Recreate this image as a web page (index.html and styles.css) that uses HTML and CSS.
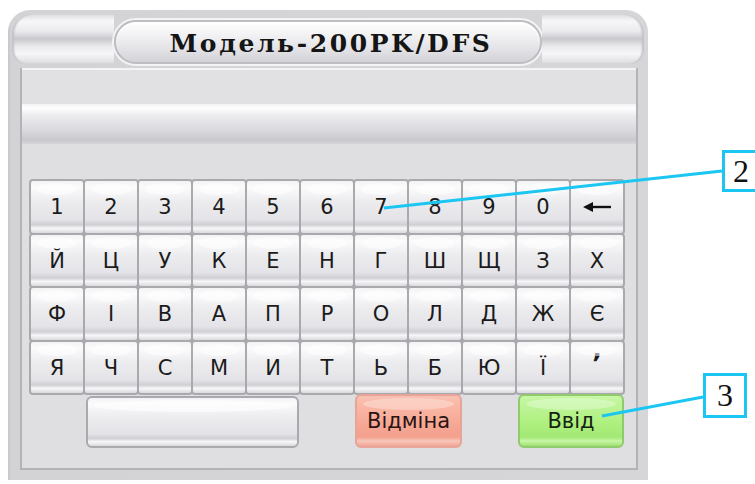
FILE: index.html
```html
<!DOCTYPE html>
<html lang="uk">
<head>
<meta charset="utf-8">
<title>Модель-200PK/DFS</title>
<link rel="stylesheet" href="styles.css">
</head>
<body>
<div class="page">
  <div class="window">
    <div class="header">
      <div class="wing wing-left"></div>
      <div class="title-pill"><span class="title-text">Модель-200PK/DFS</span></div>
      <div class="wing wing-right"></div>
    </div>
    <div class="panel">
      <div class="input-line"></div>
      <div class="input-bar"></div>
      <div class="keyboard">
        <div class="key">1</div><div class="key">2</div><div class="key">3</div><div class="key">4</div><div class="key">5</div><div class="key">6</div><div class="key">7</div><div class="key">8</div><div class="key">9</div><div class="key">0</div>
        <div class="key"><svg class="arrow" width="30" height="12" viewBox="0 0 30 12"><path d="M9 6H29" stroke="#111" stroke-width="2.4"/><path d="M1 6L11 1V11Z" fill="#111"/></svg></div>
        <div class="key">Й</div><div class="key">Ц</div><div class="key">У</div><div class="key">К</div><div class="key">Е</div><div class="key">Н</div><div class="key">Г</div><div class="key">Ш</div><div class="key">Щ</div><div class="key">З</div><div class="key">Х</div>
        <div class="key">Ф</div><div class="key">І</div><div class="key">В</div><div class="key">А</div><div class="key">П</div><div class="key">Р</div><div class="key">О</div><div class="key">Л</div><div class="key">Д</div><div class="key">Ж</div><div class="key">Є</div>
        <div class="key">Я</div><div class="key">Ч</div><div class="key">С</div><div class="key">М</div><div class="key">И</div><div class="key">Т</div><div class="key">Ь</div><div class="key">Б</div><div class="key">Ю</div><div class="key">Ї</div><div class="key apos">’</div>
        <div class="key space"></div>
        <div class="key btn-cancel">Відміна</div>
        <div class="key btn-enter">Ввід</div>
      </div>
    </div>
  </div>

  <svg class="leaders" width="755" height="484" viewBox="0 0 755 484">
    <line x1="722" y1="171" x2="384" y2="208" stroke="#1cc6f2" stroke-width="3"/>
    <line x1="703" y1="397" x2="602" y2="416" stroke="#1cc6f2" stroke-width="3"/>
  </svg>
  <div class="callout callout-2">2</div>
  <div class="callout callout-3">3</div>
</div>
</body>
</html>
```
FILE: styles.css
```css
html, body {
  margin: 0;
  padding: 0;
  background: #ffffff;
}

.page {
  position: relative;
  width: 755px;
  height: 484px;
  padding: 10px 0 0 8px;
  box-sizing: border-box;
  overflow: hidden;
}

/* outer device frame */
.window {
  width: 640px;
  height: 470px;
  box-sizing: border-box;
  border-radius: 22px 22px 0 0;
  background: linear-gradient(to right, #c6c6c9 0, #d3d3d6 3px, #d6d6d9 100%);
  padding: 0 10px 10px 12px;
  display: flex;
  flex-direction: column;
}

/* title area */
.header {
  height: 58px;
  margin: 0 -8px 0 -10px;
  padding: 3px 2px 0 2px;
  box-sizing: border-box;
  display: flex;
  align-items: stretch;
}

.wing {
  flex: 1;
  height: 50px;
  margin-top: 1px;
  background: linear-gradient(to bottom,
    #dcdce0 0,
    #f7f7f9 14%,
    #ebebee 34%,
    #c9c9cd 50%,
    #e9e9ec 64%,
    #f6f6f8 80%,
    #dcdce0 100%);
}

.wing-left {
  border-radius: 20px 0 0 14px;
  box-shadow: inset 2px 0 2px #c2c2c6;
}

.wing-right {
  border-radius: 0 20px 14px 0;
  box-shadow: inset -2px 0 2px #c2c2c6;
}

.title-pill {
  width: 428px;
  height: 44px;
  margin-top: 7px;
  box-sizing: border-box;
  border-radius: 22px;
  border: 2px solid #bdbdc2;
  box-shadow: 0 0 0 2px #f4f4f6, inset 0 2px 2px #ffffff;
  background: linear-gradient(to bottom, #fefefe 0, #f1f1f3 35%, #e2e2e6 70%, #d3d3d7 100%);
  display: flex;
  align-items: center;
  justify-content: center;
}

.title-text {
  font-family: "DejaVu Serif", "Liberation Serif", serif;
  font-weight: bold;
  font-size: 25px;
  color: #151515;
  letter-spacing: 2.6px;
  padding-left: 6px;
  padding-top: 2px;
}

/* inner panel */
.panel {
  flex: 1;
  background: #dfdfe2;
  border: 2px solid #b3b3b7;
  border-top: none;
  display: flex;
  flex-direction: column;
}

.input-line {
  height: 36px;
  background: #e1e1e4;
  border-top: 2px solid #f4f4f6;
  box-sizing: border-box;
}

.input-bar {
  height: 40px;
  background: linear-gradient(to bottom,
    #f2f2f4 0,
    #ffffff 10%,
    #ebebee 30%,
    #dadade 65%,
    #c9c9cd 90%,
    #d6d6da 100%);
}

.keyboard {
  margin: 36px 12px 0 8px;
  display: grid;
  grid-template-columns: repeat(11, 54px);
  grid-template-rows: repeat(5, 53.5px);
}

.key {
  position: relative;
  box-sizing: border-box;
  border: 2px solid #a9a9ae;
  margin: -1px;
  border-radius: 4px;
  background: linear-gradient(to bottom,
    #f3f3f5 0,
    #fbfbfc 12%,
    #ececef 40%,
    #e4e4e8 74%,
    #cfcfd4 84%,
    #f7f7f9 91%,
    #dadade 100%);
  display: flex;
  align-items: center;
  justify-content: center;
  padding-top: 1px;
  font-family: "DejaVu Sans", "Noto Sans", sans-serif;
  font-size: 21px;
  color: #1b1b1b;
}

.key::before {
  content: "";
  position: absolute;
  left: 6px;
  right: 6px;
  top: 2px;
  height: 12px;
  border-radius: 50%;
  background: rgba(255, 255, 255, 0.55);
}

.arrow {
  display: block;
}

.apos {
  align-items: flex-start;
  padding-top: 7px;
  font-size: 26px;
  font-weight: bold;
}

.space {
  grid-column: 2 / span 4;
  margin: 2px 1px 0 2px;
  border-radius: 6px;
}

.btn-cancel {
  grid-column: 7 / span 2;
  margin: 0 0 0 1px;
  border-radius: 6px;
  border-color: #e6a598;
  color: #2a1414;
  background: linear-gradient(to bottom,
    #f7c1b3 0,
    #fbb9a8 15%,
    #f6a895 55%,
    #f3a08d 82%,
    #f7c7bb 90%,
    #f1a594 100%);
}

.btn-enter {
  grid-column: 10 / span 2;
  margin: 0 0 0 2px;
  border-radius: 6px;
  border-color: #8fcb6c;
  color: #142410;
  background: linear-gradient(to bottom,
    #c8f7a5 0,
    #bff59a 15%,
    #aef07f 55%,
    #a2e874 82%,
    #c8f6a8 90%,
    #9fe070 100%);
}

.btn-cancel::before,
.btn-enter::before {
  background: rgba(255, 255, 255, 0.3);
}

/* numbered leader labels */
.leaders {
  position: absolute;
  left: 0;
  top: 0;
  pointer-events: none;
}

.callout {
  position: absolute;
  box-sizing: border-box;
  border: 3px solid #1cc6f2;
  background: #ffffff;
  font-family: "Liberation Serif", "Times New Roman", serif;
  font-size: 32px;
  color: #111;
  display: flex;
  align-items: center;
  justify-content: center;
}

.callout-2 {
  left: 722px;
  top: 150px;
  width: 40px;
  height: 42px;
  justify-content: flex-start;
  padding-left: 8px;
}

.callout-3 {
  left: 703px;
  top: 373px;
  width: 44px;
  height: 45px;
}
```
